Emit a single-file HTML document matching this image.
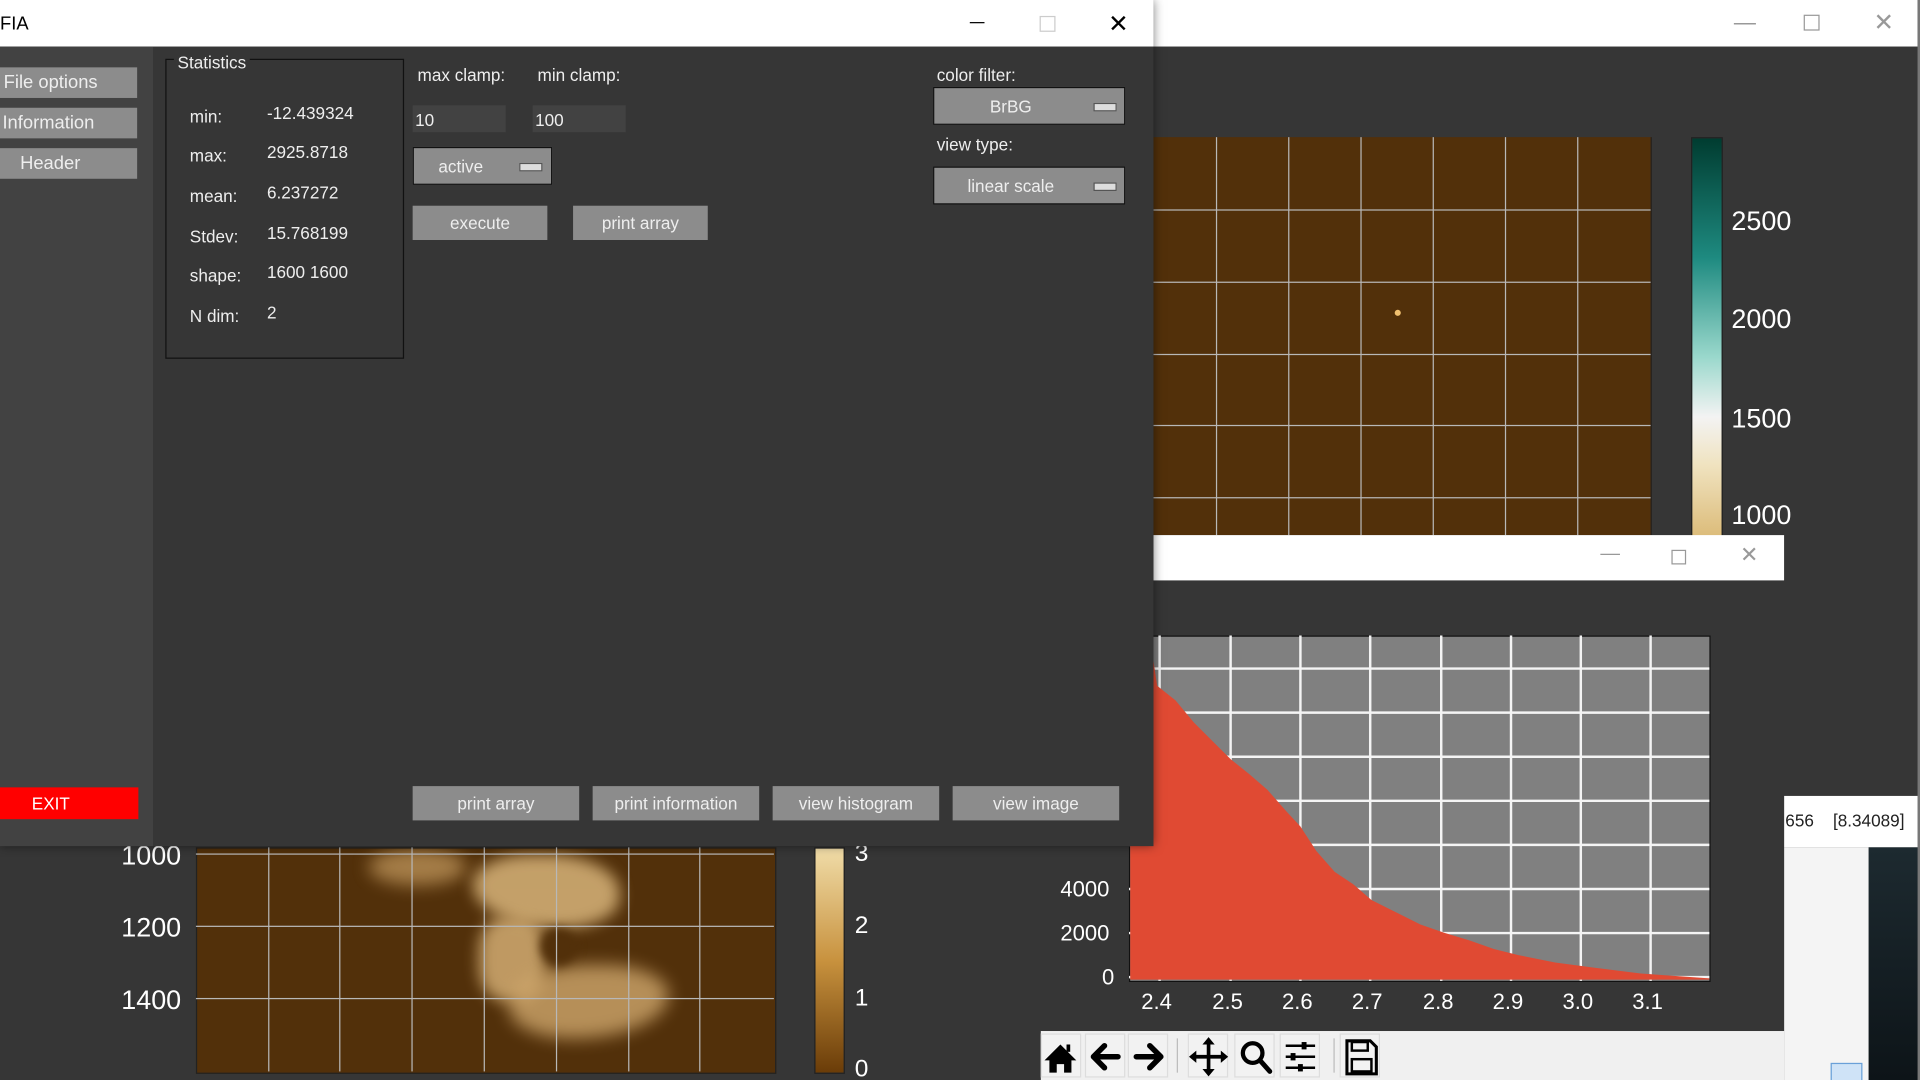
<!DOCTYPE html>
<html><head><meta charset="utf-8"><style>
html,body{margin:0;padding:0;width:1920px;height:1080px;overflow:hidden;background:#363636;}
#s{position:absolute;left:0;top:0;width:1568px;height:882px;transform:scale(1.22449);transform-origin:0 0;font-family:"Liberation Sans",sans-serif;background:#363636;overflow:hidden}
.a{position:absolute}
.t{color:#fff;font-size:22px}
.btn{position:absolute;background:#8c8c8c;color:#eee;font-size:14px;text-align:center;box-sizing:border-box}
.lbl{position:absolute;color:#eee;font-size:14px}
.vl{position:absolute;width:1px;background:#b8b8b8}
.hl{position:absolute;height:1px;background:#b8b8b8}
.tb{position:absolute;top:844px;width:33px;height:36px;background:#f2f2f2;border:1px solid #ddd;box-sizing:border-box}
</style></head><body><div id="s">

<!-- top right window -->
<div class="a" style="left:942px;top:0;width:624px;height:38px;background:#fff"></div>
<div class="a" style="left:1566px;top:0;width:2px;height:882px;background:#777"></div>
<div class="a" style="left:1416px;top:8px;color:#999;font-size:18px">—</div>
<div class="a" style="left:1473px;top:12px;width:11px;height:11px;border:1px solid #999"></div>
<div class="a" style="left:1530px;top:6px;color:#999;font-size:20px">✕</div>
<div class="a" style="left:942px;top:112px;width:406px;height:325px;background:#52300a;border-right:1px solid #222"></div>
<div class="vl" style="left:993px;top:112px;height:325px"></div><div class="vl" style="left:1052px;top:112px;height:325px"></div><div class="vl" style="left:1111px;top:112px;height:325px"></div><div class="vl" style="left:1170px;top:112px;height:325px"></div><div class="vl" style="left:1229px;top:112px;height:325px"></div><div class="vl" style="left:1288px;top:112px;height:325px"></div>
<div class="hl" style="left:942px;top:171px;width:406px"></div><div class="hl" style="left:942px;top:230px;width:406px"></div><div class="hl" style="left:942px;top:289px;width:406px"></div><div class="hl" style="left:942px;top:347px;width:406px"></div><div class="hl" style="left:942px;top:406px;width:406px"></div>
<div class="a" style="left:1139px;top:253px;width:5px;height:5px;border-radius:50%;background:#f0c070"></div>
<div class="a" style="left:1381px;top:112px;width:24px;height:325px;background:linear-gradient(#003c30,#1e8a80 30%,#9ad8cc 55%,#f3f3f3 70%,#f0e3c0 82%,#dcbc7a);border:1px solid #222"></div>
<div class="a t" style="left:1414px;top:168px">2500</div>
<div class="a t" style="left:1414px;top:248px">2000</div>
<div class="a t" style="left:1414px;top:329px">1500</div>
<div class="a t" style="left:1414px;top:408px">1000</div>

<!-- desktop strip right -->
<div class="a" style="left:1457px;top:650px;width:109px;height:42px;background:#fff"></div>
<div class="a" style="left:1458px;top:662px;font-size:14px;color:#222">656 &nbsp;&nbsp; [8.34089]</div>
<div class="a" style="left:1526px;top:692px;width:40px;height:190px;background:linear-gradient(#1d2a30,#0d1418)"></div>
<div class="a" style="left:1457px;top:692px;width:69px;height:190px;background:#f4f4f4"></div>
<div class="a" style="left:1495px;top:868px;width:24px;height:14px;background:#cfe3f7;border:1px solid #6aa0d8"></div>

<!-- bottom-left image -->
<div class="a" style="left:160px;top:692px;width:472px;height:183px;background:#52300a;border:1px solid #222;overflow:hidden">
  <div class="a" style="left:225px;top:5px;width:120px;height:60px;background:#d8b47a;opacity:.85;border-radius:40% 50% 40% 60%;filter:blur(6px)"></div>
  <div class="a" style="left:140px;top:0;width:80px;height:30px;background:#c89e62;opacity:.7;border-radius:50%;filter:blur(7px)"></div>
  <div class="a" style="left:230px;top:55px;width:55px;height:70px;background:#d2ac72;opacity:.85;border-radius:40%;filter:blur(6px)"></div>
  <div class="a" style="left:255px;top:95px;width:130px;height:60px;background:#cfa76c;opacity:.8;border-radius:50% 40% 60% 40%;filter:blur(7px)"></div>
  <div class="a" style="left:280px;top:65px;width:30px;height:30px;background:#52300a;border-radius:50%;filter:blur(4px)"></div>
</div>
<div class="vl" style="left:219px;top:692px;height:183px"></div><div class="vl" style="left:277px;top:692px;height:183px"></div><div class="vl" style="left:336px;top:692px;height:183px"></div><div class="vl" style="left:395px;top:692px;height:183px"></div><div class="vl" style="left:454px;top:692px;height:183px"></div><div class="vl" style="left:513px;top:692px;height:183px"></div><div class="vl" style="left:571px;top:692px;height:183px"></div>
<div class="hl" style="left:160px;top:697px;width:472px"></div><div class="hl" style="left:160px;top:756px;width:472px"></div><div class="hl" style="left:160px;top:815px;width:472px"></div>
<div class="a t" style="left:99px;top:686px">1000</div>
<div class="a t" style="left:99px;top:745px">1200</div>
<div class="a t" style="left:99px;top:804px">1400</div>
<div class="a" style="left:665px;top:692px;width:23px;height:183px;background:linear-gradient(#f0dca8,#c8923e 50%,#6a3c08);border:1px solid #222"></div>
<div class="a t" style="left:698px;top:686px;font-size:20px">3</div>
<div class="a t" style="left:698px;top:745px;font-size:20px">2</div>
<div class="a t" style="left:698px;top:804px;font-size:20px">1</div>
<div class="a t" style="left:698px;top:862px;font-size:20px">0</div>

<!-- histogram window -->
<div class="a" style="left:850px;top:474px;width:607px;height:368px;background:#363636"></div>
<div class="a" style="left:942px;top:437px;width:515px;height:37px;background:#fff"></div>
<div class="a" style="left:1307px;top:444px;color:#999;font-size:16px">—</div>
<div class="a" style="left:1365px;top:449px;width:10px;height:10px;border:1px solid #999"></div>
<div class="a" style="left:1421px;top:443px;color:#999;font-size:18px">✕</div>
<svg class="a" style="left:922px;top:519px" width="475" height="283" viewBox="922 519 475 283">
<rect x="922" y="519" width="475" height="283" fill="#808080" stroke="#111" stroke-width="2"/>
<g stroke="#f4f4f4" stroke-width="2">
<line x1="947" y1="519" x2="947" y2="801"/><line x1="1005" y1="519" x2="1005" y2="801"/><line x1="1062" y1="519" x2="1062" y2="801"/><line x1="1119" y1="519" x2="1119" y2="801"/><line x1="1177" y1="519" x2="1177" y2="801"/><line x1="1234" y1="519" x2="1234" y2="801"/><line x1="1291" y1="519" x2="1291" y2="801"/><line x1="1348" y1="519" x2="1348" y2="801"/>
<line x1="922" y1="546" x2="1396" y2="546"/><line x1="922" y1="582" x2="1396" y2="582"/><line x1="922" y1="618" x2="1396" y2="618"/><line x1="922" y1="654" x2="1396" y2="654"/><line x1="922" y1="690" x2="1396" y2="690"/><line x1="922" y1="726" x2="1396" y2="726"/><line x1="922" y1="762" x2="1396" y2="762"/><line x1="922" y1="798" x2="1396" y2="798"/>
</g>
<path fill="#e04a33" d="M923 800 L923 540 L942 540 L945 560 L960 572 L975 590 L990 605 L1005 620 L1020 632 L1035 645 L1050 662 L1062 675 L1075 695 L1090 712 L1105 722 L1120 735 L1140 745 L1160 755 L1180 762 L1200 768 L1220 775 L1240 780 L1270 786 L1300 790 L1340 795 L1396 799 L1396 800 Z"/>
</svg>
<div class="a t" style="left:866px;top:716px;font-size:18px">4000</div>
<div class="a t" style="left:866px;top:752px;font-size:18px">2000</div>
<div class="a t" style="left:900px;top:788px;font-size:18px">0</div>
<div class="a t" style="left:932px;top:808px;font-size:18px">2.4</div><div class="a t" style="left:990px;top:808px;font-size:18px">2.5</div><div class="a t" style="left:1047px;top:808px;font-size:18px">2.6</div><div class="a t" style="left:1104px;top:808px;font-size:18px">2.7</div><div class="a t" style="left:1162px;top:808px;font-size:18px">2.8</div><div class="a t" style="left:1219px;top:808px;font-size:18px">2.9</div><div class="a t" style="left:1276px;top:808px;font-size:18px">3.0</div><div class="a t" style="left:1333px;top:808px;font-size:18px">3.1</div>
<div class="a" style="left:850px;top:842px;width:607px;height:40px;background:#f0f0f0"></div>
<div class="tb" style="left:850px"></div><div class="tb" style="left:886px"></div><div class="tb" style="left:921px"></div>
<div class="tb" style="left:970px"></div><div class="tb" style="left:1008px"></div><div class="tb" style="left:1045px"></div><div class="tb" style="left:1094px"></div>
<div class="a" style="left:961px;top:848px;width:1px;height:28px;background:#bbb"></div>
<div class="a" style="left:1089px;top:848px;width:1px;height:28px;background:#bbb"></div>
<svg class="a" style="left:850px;top:842px" width="300" height="40" viewBox="850 842 300 40">
<path d="M853 866 L866 853 L879 866 L875 866 L875 876 L869 876 L869 869 L863 869 L863 876 L857 876 L857 866 Z" fill="#000"/>
<rect x="871" y="853" width="3" height="6" fill="#000"/>
<path d="M893 863 L902 854 M893 863 L902 872 M893 863 L913 863" stroke="#000" stroke-width="4.5" fill="none" stroke-linecap="round" stroke-linejoin="round"/>
<path d="M948 863 L939 854 M948 863 L939 872 M948 863 L928 863" stroke="#000" stroke-width="4.5" fill="none" stroke-linecap="round" stroke-linejoin="round"/>
<path d="M987 849 V877 M973 863 H1001" stroke="#000" stroke-width="3"/>
<path d="M987 847 L982 853 H992 Z M987 879 L982 873 H992 Z M971 863 L977 858 V868 Z M1003 863 L997 858 V868 Z" fill="#000"/>
<circle cx="1023" cy="860" r="8" stroke="#000" stroke-width="3.5" fill="none"/>
<path d="M1029 866 L1037 875" stroke="#000" stroke-width="4" stroke-linecap="round"/>
<path d="M1050 854 H1074 M1050 863 H1074 M1050 872 H1074" stroke="#000" stroke-width="2"/>
<rect x="1063" y="851" width="4" height="6" fill="#000"/><rect x="1054" y="860" width="4" height="6" fill="#000"/><rect x="1060" y="869" width="4" height="6" fill="#000"/>
<path d="M1100 850 H1119 L1124 855 V877 H1100 Z" fill="none" stroke="#000" stroke-width="2.5"/>
<rect x="1104" y="851" width="13" height="7" fill="none" stroke="#000" stroke-width="2"/>
<rect x="1104" y="865" width="16" height="10" fill="none" stroke="#000" stroke-width="2"/>
</svg>

<!-- main window -->
<div class="a" style="left:0;top:0;width:942px;height:691px;background:#363636;box-shadow:0 0 8px rgba(0,0,0,.5)"></div>
<div class="a" style="left:0;top:0;width:942px;height:38px;background:#fff"></div>
<div class="a" style="left:0;top:11px;font-size:15px;color:#000">FIA</div>
<div class="a" style="left:792px;top:18px;width:12px;height:1px;background:#000"></div>
<div class="a" style="left:849px;top:13px;width:11px;height:11px;border:1px solid #ccc"></div>
<div class="a" style="left:905px;top:7px;font-size:20px;color:#000">✕</div>
<div class="a" style="left:0;top:38px;width:125px;height:653px;background:#424242"></div>
<div class="btn" style="left:0;top:55px;width:112px;height:25px;text-align:left;padding:4px 3px;font-size:15px">File options</div>
<div class="btn" style="left:0;top:88px;width:112px;height:25px;text-align:left;padding:4px 2px;font-size:15px">Information</div>
<div class="btn" style="left:0;top:121px;width:112px;height:25px;padding:4px 0 0 0;font-size:15px;text-indent:-30px">Header</div>
<div class="btn" style="left:0;top:643px;width:113px;height:26px;background:#f00;color:#fff;padding-top:5px;text-indent:-30px">EXIT</div>

<div class="a" style="left:135px;top:48px;width:193px;height:243px;border:1px solid #111"></div>
<div class="a" style="left:142px;top:43px;background:#363636;padding:0 3px;color:#eee;font-size:14px">Statistics</div>
<div class="lbl" style="left:155px;top:87px">min:</div><div class="lbl" style="left:218px;top:84px">-12.439324</div>
<div class="lbl" style="left:155px;top:119px">max:</div><div class="lbl" style="left:218px;top:116px">2925.8718</div>
<div class="lbl" style="left:155px;top:152px">mean:</div><div class="lbl" style="left:218px;top:149px">6.237272</div>
<div class="lbl" style="left:155px;top:185px">Stdev:</div><div class="lbl" style="left:218px;top:182px">15.768199</div>
<div class="lbl" style="left:155px;top:217px">shape:</div><div class="lbl" style="left:218px;top:214px">1600 1600</div>
<div class="lbl" style="left:155px;top:250px">N dim:</div><div class="lbl" style="left:218px;top:247px">2</div>

<div class="lbl" style="left:341px;top:53px">max clamp:</div>
<div class="lbl" style="left:439px;top:53px">min clamp:</div>
<div class="a" style="left:337px;top:86px;width:76px;height:22px;background:#424242;color:#eee;font-size:14px;padding:4px 2px;box-sizing:border-box">10</div>
<div class="a" style="left:435px;top:86px;width:76px;height:22px;background:#424242;color:#eee;font-size:14px;padding:4px 2px;box-sizing:border-box">100</div>
<div class="btn" style="left:337px;top:120px;width:114px;height:31px;border:1px solid #111;padding-top:7px;text-align:left;padding-left:20px">active<span class="a" style="left:86px;top:12px;width:17px;height:5px;background:#ddd;border:1px solid #555"></span></div>
<div class="btn" style="left:337px;top:168px;width:110px;height:28px;padding-top:6px">execute</div>
<div class="btn" style="left:468px;top:168px;width:110px;height:28px;padding-top:6px">print array</div>

<div class="lbl" style="left:765px;top:53px">color filter:</div>
<div class="btn" style="left:762px;top:71px;width:157px;height:31px;border:1px solid #111;padding-top:7px;text-indent:-30px">BrBG<span class="a" style="left:130px;top:12px;width:17px;height:5px;background:#ddd;border:1px solid #555"></span></div>
<div class="lbl" style="left:765px;top:110px">view type:</div>
<div class="btn" style="left:762px;top:136px;width:157px;height:31px;border:1px solid #111;padding-top:7px;text-indent:-30px">linear scale<span class="a" style="left:130px;top:12px;width:17px;height:5px;background:#ddd;border:1px solid #555"></span></div>

<div class="btn" style="left:337px;top:642px;width:136px;height:28px;padding-top:6px">print array</div>
<div class="btn" style="left:484px;top:642px;width:136px;height:28px;padding-top:6px">print information</div>
<div class="btn" style="left:631px;top:642px;width:136px;height:28px;padding-top:6px">view histogram</div>
<div class="btn" style="left:778px;top:642px;width:136px;height:28px;padding-top:6px">view image</div>

</div></body></html>
